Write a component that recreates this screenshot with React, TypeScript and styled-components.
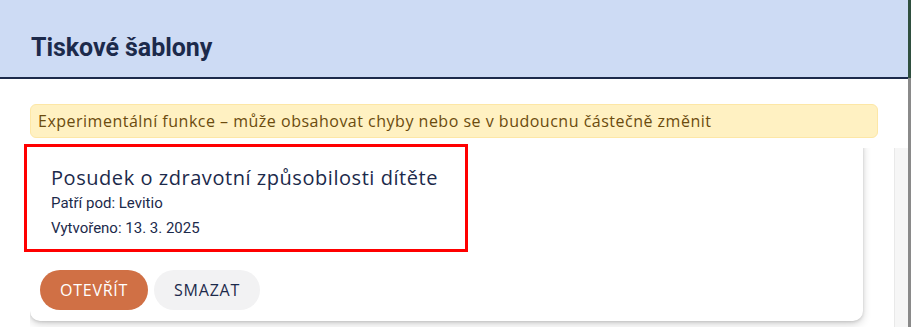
import React from 'react';
import styled, { createGlobalStyle } from 'styled-components';

const GlobalStyle = createGlobalStyle`
  html, body {
    margin: 0;
    padding: 0;
    background: #ffffff;
  }
  body {
    font-family: 'Open Sans', 'Liberation Sans', sans-serif;
  }
`;

const Page = styled.div`
  position: relative;
  display: flex;
  width: 911px;
  height: 327px;
  overflow: hidden;
`;

const Dialog = styled.div`
  flex: 1;
  display: flex;
  flex-direction: column;
  min-width: 0;
`;

const WindowEdge = styled.div`
  width: 3px;
  background: linear-gradient(#2f4f3f 0, #2f4f3f 78px, #8a8a8a 78px);
`;

const Header = styled.header`
  height: 79px;
  background-color: #cddbf4;
  border-bottom: 2px solid #1c2a4b;
  display: flex;
  align-items: center;
  padding: 18px 31px 0;
  box-sizing: border-box;
`;

const Title = styled.h1`
  margin: 0;
  font-family: Roboto, 'Liberation Sans', sans-serif;
  font-weight: 700;
  font-size: 25px;
  color: #1c2a4b;
  letter-spacing: -0.05px;
`;

const Body = styled.div`
  flex: 1;
  display: flex;
  flex-direction: column;
  padding: 25px 0 0 30px;
  min-height: 0;
`;

const Notice = styled.div`
  width: 848px;
  height: 34px;
  box-sizing: border-box;
  display: flex;
  align-items: center;
  padding: 0 7px;
  background-color: #fff1c2;
  border: 1px solid #fde7a6;
  border-radius: 6px;
  font-family: 'Open Sans', sans-serif;
  font-size: 16px;
  letter-spacing: 0.5px;
  color: #6b4b0e;
`;

const ScrollArea = styled.div`
  flex: 1;
  display: flex;
  margin-top: 10px;
  min-height: 0;
  overflow: hidden;
`;

const List = styled.div`
  flex: 1;
  padding-right: 31px;
  overflow: hidden;
`;

const ScrollTrack = styled.div`
  width: 13px;
  background-color: #f6f6f6;
  border-left: 1px solid #e9e9e9;
`;

const Card = styled.article`
  margin-top: -12px;
  background: #ffffff;
  border-radius: 10px;
  box-shadow: 0 3px 8px rgba(0, 0, 0, 0.18), 0 1px 3px rgba(0, 0, 0, 0.12);
  padding: 29px 21px 11px 21px;
  margin-bottom: 8px;
`;

const Highlight = styled.div`
  position: absolute;
  left: 24px;
  top: 144px;
  width: 444px;
  height: 108px;
  box-sizing: border-box;
  border: 3px solid #ff0000;
  pointer-events: none;
`;

const CardTitle = styled.h2`
  margin: 0;
  font-family: 'Open Sans', sans-serif;
  font-weight: 500;
  font-size: 20px;
  letter-spacing: 0.55px;
  line-height: 26px;
  color: #1c2a4b;
`;

const Meta = styled.p`
  margin: 0;
  font-family: Roboto, 'Liberation Sans', sans-serif;
  font-size: 15px;
  line-height: 25px;
  color: #1c2a4b;
`;

const Actions = styled.div`
  display: flex;
  gap: 6px;
  margin-top: 29px;
  margin-left: -11px;
`;

const Button = styled.button<{ $primary?: boolean }>`
  height: 40px;
  padding: 0 20px;
  border: none;
  border-radius: 20px;
  font-family: 'Open Sans', sans-serif;
  font-weight: 500;
  font-size: 16px;
  letter-spacing: 0.75px;
  text-transform: uppercase;
  background-color: ${({ $primary }) => ($primary ? '#d07045' : '#f2f2f3')};
  color: ${({ $primary }) => ($primary ? '#ffffff' : '#1c2a4b')};
`;

export default function App() {
  return (
    <Page>
      <GlobalStyle />
      <Dialog>
        <Header>
          <Title>Tiskové šablony</Title>
        </Header>
        <Body>
          <Notice>
            Experimentální funkce – může obsahovat chyby nebo se v budoucnu částečně změnit
          </Notice>
          <ScrollArea>
            <List>
              <Card>
                <CardTitle>Posudek o zdravotní způsobilosti dítěte</CardTitle>
                <Meta>Patří pod: Levitio</Meta>
                <Meta>Vytvořeno: 13. 3. 2025</Meta>
                <Actions>
                  <Button $primary>Otevřít</Button>
                  <Button>Smazat</Button>
                </Actions>
              </Card>
            </List>
            <ScrollTrack />
          </ScrollArea>
        </Body>
      </Dialog>
      <WindowEdge />
      <Highlight />
    </Page>
  );
}
